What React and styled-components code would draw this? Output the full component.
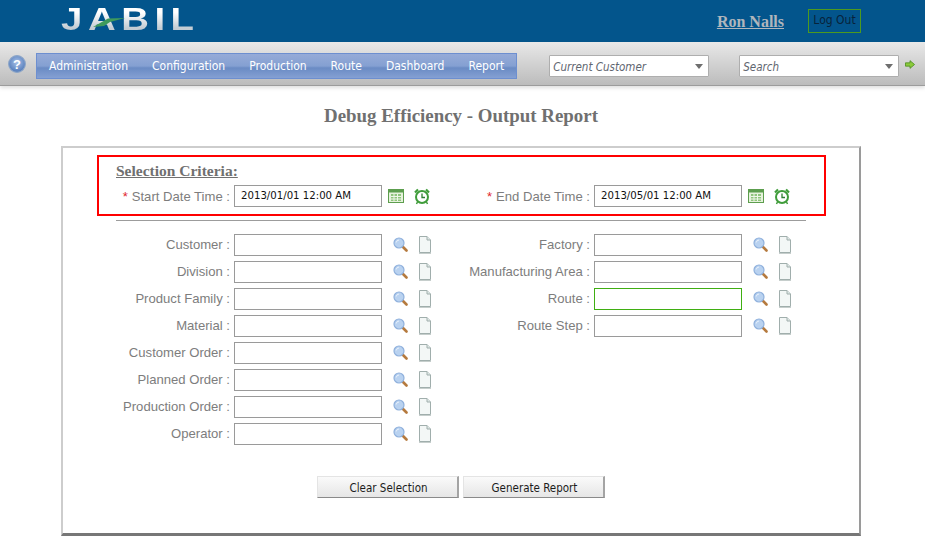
import styled, { createGlobalStyle } from "styled-components";

const GlobalStyle = createGlobalStyle`
  html, body {
    margin: 0;
    padding: 0;
    background: #fff;
    font-family: "Liberation Sans", Arial, sans-serif;
  }
  * { box-sizing: border-box; }
`;

const uiFont = `"DejaVu Sans Condensed", "DejaVu Sans", sans-serif`;

const Page = styled.div`
  width: 925px;
  height: 543px;
  overflow: hidden;
`;

const Header = styled.header`
  height: 42px;
  background: #03558c;
  display: flex;
  align-items: center;
  justify-content: space-between;
  padding: 0 64px 0 61px;
`;

const Logo = styled.div`
  position: relative;
  width: 134px;
  height: 26px;
  margin-top: -4px;
`;

const LogoText = styled.span`
  display: block;
  font: 700 32px/26px "Liberation Sans", Arial, sans-serif;
  letter-spacing: 4.6px;
  white-space: nowrap;
  transform: scaleX(1.2);
  transform-origin: left center;
  background: linear-gradient(#ffffff 25%, #c3ccd3 85%);
  -webkit-background-clip: text;
  background-clip: text;
  color: transparent;
`;

const Swoosh = styled.svg`
  position: absolute;
  left: 31px;
  top: 3px;
`;

const UserArea = styled.div`
  display: flex;
  align-items: center;
  gap: 24px;
`;

const UserName = styled.a`
  font: 700 16px "Liberation Serif", "Times New Roman", serif;
  color: #b0b6bc;
  text-decoration: underline;
  margin-top: 1px;
`;

const LogOut = styled.div`
  width: 53px;
  height: 24px;
  border: 1px solid #4d9a1f;
  font: 12px/21px ${uiFont};
  color: #08233a;
  text-align: center;
`;

const Toolbar = styled.div`
  height: 44px;
  background: linear-gradient(#e8e8e8, #bcbcbc);
  border-bottom: 1px solid #9c9c9c;
  box-shadow: 0 2px 4px rgba(0, 0, 0, 0.13);
  display: flex;
  align-items: center;
  padding: 5px 9px 0 8px;
`;

const HelpWrap = styled.div`
  flex: none;
  display: flex;
  margin-top: -4px;
`;

const Nav = styled.nav`
  display: flex;
  flex: none;
  margin-left: 10px;
  height: 26px;
  border: 1px solid #6d8fd0;
  background: linear-gradient(#96abd8 0%, #84a0d2 50%, #6a8bc4 58%, #85a0d3 100%);
`;

const NavItem = styled.a`
  padding: 0 12px;
  font: 12px/24px ${uiFont};
  color: #fff;
  white-space: nowrap;
`;

const Combo = styled.div`
  flex: none;
  width: 160px;
  height: 22px;
  margin-left: ${(p) => p.$left}px;
  background: #fff;
  border: 1px solid #aeaeae;
  border-radius: 1px;
  display: flex;
  align-items: center;
  justify-content: space-between;
  padding: 1px 5px 0 3px;
  font: italic 11.500px ${uiFont};
  color: #5f6670;
`;

const ComboArrow = styled.span`
  width: 0;
  height: 0;
  border-left: 4px solid transparent;
  border-right: 4px solid transparent;
  border-top: 5px solid #6e6e6e;
`;

const Title = styled.h1`
  margin: 19px 0 19px;
  padding-right: 3px;
  font: 700 18.900px/22px "Liberation Serif", "Times New Roman", serif;
  color: #707070;
  text-align: center;
`;

const Panel = styled.section`
  width: 800px;
  height: 390px;
  margin-left: 61px;
  border-style: solid;
  border-width: 2px 2px 3px 2px;
  border-color: #cdcdcd #9a9a9a #777 #cdcdcd;
  padding-top: 7px;
`;

const CriteriaBox = styled.div`
  width: 729px;
  height: 61px;
  margin-left: 34px;
  border: 2px solid #f00;
  padding: 5px 0 0 17px;
`;

const CriteriaHeading = styled.h2`
  margin: 0 0 5px;
  font: 700 15.500px/18px "Liberation Serif", "Times New Roman", serif;
  color: #707070;
  text-decoration: underline;
`;

const Divider = styled.hr`
  width: 690px;
  height: 1px;
  margin: 4px 0 13px 53px;
  border: 0;
  background: #9c9c9c;
`;

const Columns = styled.div`
  display: grid;
  grid-template-columns: 344px 1fr;
  margin-left: ${(p) => p.$left}px;
`;

const Column = styled.div`
  display: flex;
  flex-direction: column;
  gap: 5px;
`;

const Field = styled.div`
  display: flex;
  align-items: center;
  height: 22px;
`;

const Label = styled.label`
  width: ${(p) => p.$width}px;
  margin-right: 4px;
  padding-bottom: ${(p) => p.$lift || 0}px;
  flex: none;
  font-size: 13.100px;
  color: #7d7d7d;
  text-align: right;
  white-space: nowrap;
`;

const Star = styled.span`
  color: #e0262c;
  margin-right: 4px;
`;

const Input = styled.div`
  width: 148px;
  height: 22px;
  flex: none;
  background: #fff;
  border: 1px solid ${(p) => (p.$active ? "#3fae12" : "#9a9a9a")};
  padding-left: 6px;
  font: 11.300px/20px ${uiFont};
  color: #111;
`;

const Icons = styled.div`
  display: flex;
  align-items: center;
  margin-left: ${(p) => p.$left || 11}px;
  padding-bottom: ${(p) => p.$lift || 0}px;
  gap: ${(p) => p.$gap || 10}px;
`;

const ButtonRow = styled.div`
  display: flex;
  justify-content: center;
  gap: 4px;
  margin-top: 31px;
`;

const Button = styled.button`
  width: 142px;
  height: 22px;
  padding: 1px 0 0 2px;
  border: 0;
  border-top: 1px solid #e4e4e4;
  border-left: 1px solid #e4e4e4;
  border-right: 2px solid #a4a4a4;
  border-bottom: 1px solid #8a8a8a;
  background: linear-gradient(#fafafa, #e6e6e6);
  font: 11.500px ${uiFont};
  color: #1c1c1c;
`;

const HelpIcon = () => (
  <svg width="18" height="18" viewBox="0 0 18 18">
    <defs>
      <radialGradient id="helpFill" cx="50%" cy="40%" r="60%">
        <stop offset="0" stopColor="#a9c2e8" />
        <stop offset="1" stopColor="#4f78b8" />
      </radialGradient>
    </defs>
    <circle cx="9" cy="9" r="8.4" fill="url(#helpFill)" stroke="#8da6c8" strokeWidth="1.100" />
    <text x="9" y="13.500" fontFamily="Liberation Sans" fontSize="13" fontWeight="700" fill="#fff" textAnchor="middle">?</text>
  </svg>
);

const ArrowIcon = () => (
  <svg width="10" height="9" viewBox="0 0 11 11" preserveAspectRatio="none" style={{ marginLeft: 6, marginTop: -4 }}>
    <path d="M.5 3.500h5V.8L10.500 5.500l-5 4.700V7.500h-5z" fill="#8ccb3a" stroke="#4f8f24" />
  </svg>
);

const CalendarIcon = () => (
  <svg width="16" height="14" viewBox="0 0 16 14">
    <rect x=".5" y=".5" width="15" height="13" fill="#e6f2dc" stroke="#5d9e4e" />
    <rect x=".5" y=".5" width="15" height="3" fill="#5d9e4e" />
    <path d="M3 5h10v7H3z" fill="#8fc47c" />
    <path d="M6 5v7M9.500 5v7M3 7.500h10M3 10h10" stroke="#eef7e8" />
  </svg>
);

const ClockIcon = () => (
  <svg width="16" height="17" viewBox="0 0 16 17">
    <path d="M1 4.500 4 1.500M15 4.500 12 1.500" stroke="#3f9c3a" strokeWidth="2.200" />
    <path d="M3.500 14 2.500 16M12.500 14l1 2" stroke="#3f9c3a" strokeWidth="1.500" />
    <circle cx="8" cy="9" r="6" fill="#fff" stroke="#3f9c3a" strokeWidth="2" />
    <path d="M8 5.500V9.500H11" fill="none" stroke="#2e7d32" strokeWidth="1.300" />
  </svg>
);

const SearchIcon = () => (
  <svg width="15" height="15" viewBox="0 0 15 15">
    <path d="M9.500 9.500 13.500 13.500" stroke="#b57a3e" strokeWidth="2.600" strokeLinecap="round" />
    <circle cx="6" cy="6" r="5" fill="#b9d2f0" stroke="#8fb0dc" strokeWidth="1.200" />
    <path d="M3.200 5.500A3 3 0 0 1 6 3" fill="none" stroke="#e8f1fb" />
  </svg>
);

const PageIcon = () => (
  <svg width="14" height="18" viewBox="0 0 14 18">
    <path d="M1.500 .5H9l3.500 3.500V16.500H1.500z" fill="#f3f7f6" stroke="#a0aeac" />
    <path d="M9 .5V4h3.500" fill="#dfe8e6" stroke="#a0aeac" />
    <path d="M1 17.500H13" stroke="#c6cecc" />
  </svg>
);

const dateFields = [
  { label: "Start Date Time :", value: "2013/01/01 12:00 AM", width: 114 },
  { label: "End Date Time :", value: "2013/05/01 12:00 AM", width: 130 },
];

const leftFields = [
  "Customer",
  "Division",
  "Product Family",
  "Material",
  "Customer Order",
  "Planned Order",
  "Production Order",
  "Operator",
];

const rightFields = ["Factory", "Manufacturing Area", "Route", "Route Step"];

const navItems = ["Administration", "Configuration", "Production", "Route", "Dashboard", "Report"];

function LookupField({ name, width, active }) {
  return (
    <Field>
      <Label $width={width} $lift={2}>{name} :</Label>
      <Input $active={active} />
      <Icons $lift={1}>
        <SearchIcon />
        <PageIcon />
      </Icons>
    </Field>
  );
}

export default function App() {
  return (
    <Page>
      <GlobalStyle />
      <Header>
        <Logo>
          <LogoText>JABIL</LogoText>
          <Swoosh width="50" height="24" viewBox="0 0 50 24">
            <path d="M1 18 16 9.500 33 9 18 13 12 17z" fill="#3f9a5c" />
          </Swoosh>
        </Logo>
        <UserArea>
          <UserName>Ron Nalls</UserName>
          <LogOut>Log Out</LogOut>
        </UserArea>
      </Header>
      <Toolbar>
        <HelpWrap>
          <HelpIcon />
        </HelpWrap>
        <Nav>
          {navItems.map((item) => (
            <NavItem key={item}>{item}</NavItem>
          ))}
        </Nav>
        <Combo $left={32}>
          Current Customer
          <ComboArrow />
        </Combo>
        <Combo $left={30}>
          Search
          <ComboArrow />
        </Combo>
        <ArrowIcon />
      </Toolbar>
      <Title>Debug Efficiency - Output Report</Title>
      <Panel>
        <CriteriaBox>
          <CriteriaHeading>Selection Criteria:</CriteriaHeading>
          <Columns $left={0}>
            {dateFields.map((f) => (
              <Field key={f.label}>
                <Label $width={f.width}>
                  <Star>*</Star>
                  {f.label}
                </Label>
                <Input>{f.value}</Input>
                <Icons $left={6} $gap={10}>
                  <CalendarIcon />
                  <ClockIcon />
                </Icons>
              </Field>
            ))}
          </Columns>
        </CriteriaBox>
        <Divider />
        <Columns $left={53}>
          <Column>
            {leftFields.map((name) => (
              <LookupField key={name} name={name} width={114} />
            ))}
          </Column>
          <Column>
            {rightFields.map((name) => (
              <LookupField key={name} name={name} width={130} active={name === "Route"} />
            ))}
          </Column>
        </Columns>
        <ButtonRow>
          <Button>Clear Selection</Button>
          <Button>Generate Report</Button>
        </ButtonRow>
      </Panel>
    </Page>
  );
}
